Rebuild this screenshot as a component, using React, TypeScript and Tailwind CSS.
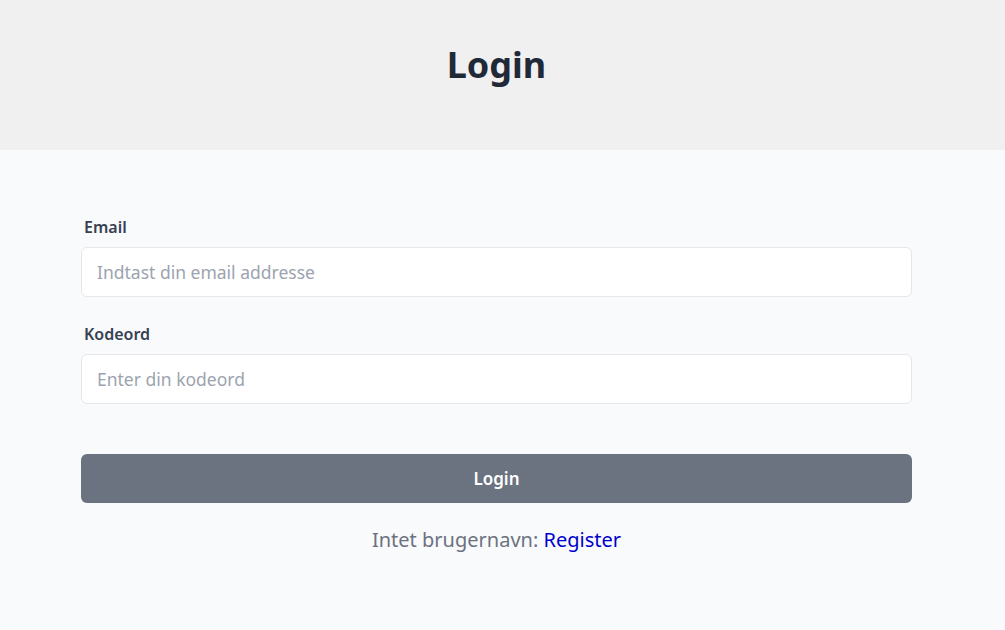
export default function App() {
  return (
    <div
      className="min-h-screen bg-[#f9fafb]"
      style={{ fontFamily: '"Noto Sans", sans-serif' }}
    >
      <header className="h-[150px] bg-[#f0f0f0]">
        <div className="w-[993px] flex justify-center pt-[40px]">
          <h1 className="text-[36px] leading-[50px] font-bold text-[#1f2937]">
            Login
          </h1>
        </div>
      </header>

      <main className="w-[993px] px-[81px] pt-[66px]">
        <form onSubmit={(e) => e.preventDefault()}>
          <div className="mb-[26px]">
            <label className="block pl-[3px] mb-[9px] text-[16px] leading-[22px] font-semibold text-[#374151]">
              Email
            </label>
            <input
              type="email"
              placeholder="Indtast din email addresse"
              className="w-full h-[50px] px-[15px] rounded-md border border-[#e5e7eb] bg-white text-[17.5px] text-gray-800 placeholder:text-[#9ca3af] outline-none"
            />
          </div>

          <div>
            <label className="block pl-[3px] mb-[9px] text-[16px] leading-[22px] font-semibold text-[#374151]">
              Kodeord
            </label>
            <input
              type="password"
              placeholder="Enter din kodeord"
              className="w-full h-[50px] px-[15px] rounded-md border border-[#e5e7eb] bg-white text-[17.5px] text-gray-800 placeholder:text-[#9ca3af] outline-none"
            />
          </div>

          <button
            type="submit"
            className="mt-[50px] w-full h-[49px] rounded-md bg-[#6b7280] text-white text-[17px] font-semibold"
          >
            Login
          </button>
        </form>

        <p className="mt-[22px] text-center text-[20px] leading-[30px] text-[#6b7280]">
          Intet brugernavn:{" "}
          <a href="#" className="text-[#0000cd]">
            Register
          </a>
        </p>
      </main>
    </div>
  );
}
